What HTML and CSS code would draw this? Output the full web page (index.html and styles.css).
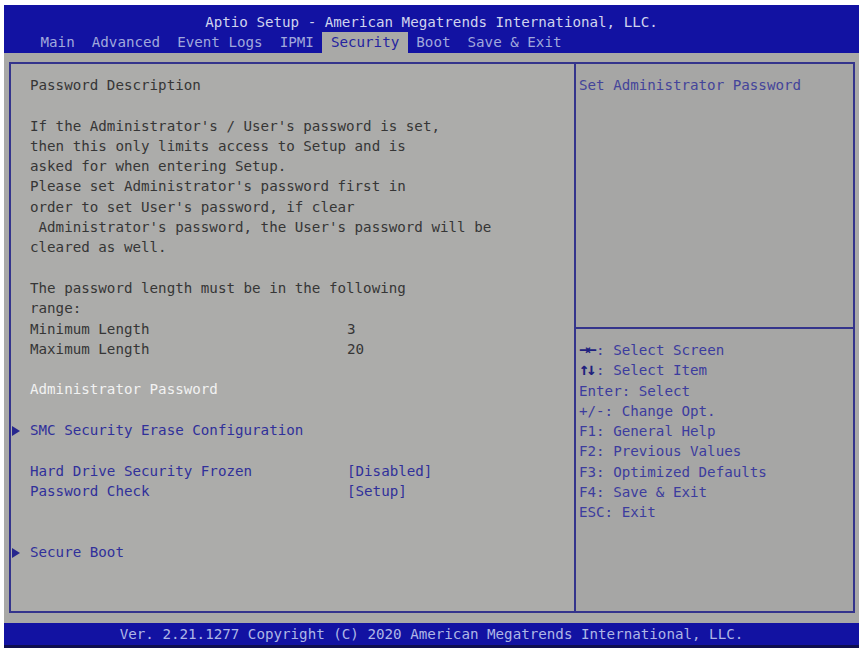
FILE: index.html
```html
<!DOCTYPE html>
<html lang="en">
<head>
    <meta charset="UTF-8">
    <meta name="viewport" content="width=device-width, initial-scale=1.0">
    <title>Aptio Setup - Security</title>
    <link rel="stylesheet" href="styles.css">
</head>
<body>
    <div class="screen">
        <header class="header">
            <div class="title">Aptio Setup - American Megatrends International, LLC.</div>
            <nav class="tabs">
                <span class="tab">Main</span>
                <span class="tab">Advanced</span>
                <span class="tab">Event Logs</span>
                <span class="tab">IPMI</span>
                <span class="tab active">Security</span>
                <span class="tab">Boot</span>
                <span class="tab">Save &amp; Exit</span>
            </nav>
        </header>

        <main class="frame">
            <section class="left">
                <div class="block">
                    <p class="line">Password Description</p>
                </div>
                <div class="block">
                    <p class="line">If the Administrator's / User's password is set,</p>
                    <p class="line">then this only limits access to Setup and is</p>
                    <p class="line">asked for when entering Setup.</p>
                    <p class="line">Please set Administrator's password first in</p>
                    <p class="line">order to set User's password, if clear</p>
                    <p class="line"> Administrator's password, the User's password will be</p>
                    <p class="line">cleared as well.</p>
                </div>
                <div class="block">
                    <p class="line">The password length must be in the following</p>
                    <p class="line">range:</p>
                    <div class="setting"><span>Minimum Length</span><span>3</span></div>
                    <div class="setting"><span>Maximum Length</span><span>20</span></div>
                </div>
                <div class="block">
                    <p class="line selected">Administrator Password</p>
                </div>
                <div class="block">
                    <p class="line item submenu">SMC Security Erase Configuration</p>
                </div>
                <div class="block">
                    <div class="setting item"><span>Hard Drive Security Frozen</span><span>[Disabled]</span></div>
                    <div class="setting item"><span>Password Check</span><span>[Setup]</span></div>
                </div>
                <div class="block wide-gap">
                    <p class="line item submenu">Secure Boot</p>
                </div>
            </section>

            <aside class="right">
                <div class="help">Set Administrator Password</div>
                <div class="keys">
                    <p class="line"><b>&rarr;&larr;</b>: Select Screen</p>
                    <p class="line"><b>&uarr;&darr;</b>: Select Item</p>
                    <p class="line">Enter: Select</p>
                    <p class="line">+/-: Change Opt.</p>
                    <p class="line">F1: General Help</p>
                    <p class="line">F2: Previous Values</p>
                    <p class="line">F3: Optimized Defaults</p>
                    <p class="line">F4: Save &amp; Exit</p>
                    <p class="line">ESC: Exit</p>
                </div>
            </aside>
        </main>

        <footer class="footer">Ver. 2.21.1277 Copyright (C) 2020 American Megatrends International, LLC.</footer>
    </div>
</body>
</html>
```

FILE: styles.css
```css
body {
    margin: 0;
    background-color: #ffffff;
    font-family: "DejaVu Sans Mono", "Liberation Mono", monospace;
    font-size: 14.2px;
}
p {
    margin: 0;
}
.screen {
    margin: 5px 3px 0 4px;
    width: 855px;
    height: 643px;
    background-color: #a9a9a7;
    display: flex;
    flex-direction: column;
}
.header {
    background-color: #1212a2;
    height: 48px;
    padding-top: 7px;
    box-sizing: border-box;
}
.title {
    text-align: center;
    line-height: 20px;
    color: #d0d4ee;
}
.tabs {
    display: flex;
    padding-left: 28px;
    line-height: 21px;
}
.tab {
    padding: 0 1ch;
    color: #a0a8dc;
    white-space: pre;
}
.tab.active {
    background-color: #a9a9a7;
    color: #2424a0;
}
.frame {
    margin: 9px 4px 0 5px;
    height: 551px;
    box-sizing: border-box;
    border: 2px solid #34348c;
    display: grid;
    grid-template-columns: 563px 1fr;
}
.line {
    line-height: 20.3px;
    white-space: pre;
}
.left {
    padding: 11px 0 0 19px;
    color: #363636;
    background-color: #acacaa;
}
.block + .block {
    margin-top: 20.3px;
}
.block.wide-gap {
    margin-top: 40.6px;
}
.setting {
    display: grid;
    grid-template-columns: 317px auto;
    line-height: 20.3px;
    white-space: pre;
}
.item {
    color: #30309a;
}
.selected {
    color: #f2f2f2;
}
.submenu::before {
    content: "";
    display: inline-block;
    margin-left: -18px;
    margin-right: 10px;
    border-left: 8px solid #26268e;
    border-top: 5px solid transparent;
    border-bottom: 5px solid transparent;
    vertical-align: -1px;
}
.right {
    border-left: 2px solid #34348c;
    display: grid;
    grid-template-rows: 263px 1fr;
    background-color: #a6a6a5;
    color: #3c3c9e;
}
.help {
    padding: 11px 0 0 3px;
    line-height: 20.3px;
    color: #44449a;
}
.keys {
    border-top: 2px solid #34348c;
    padding: 11px 0 0 3px;
}
.keys b {
    display: inline-block;
    width: 17.1px;
    font-size: 17px;
    line-height: 1;
    letter-spacing: -3px;
    color: #20207e;
}
.footer {
    margin-top: 10px;
    flex: 1;
    background-color: #1212a2;
    border-bottom: 3px solid #0e0e4e;
    color: #aeb6e6;
    text-align: center;
    line-height: 22px;
}
```
